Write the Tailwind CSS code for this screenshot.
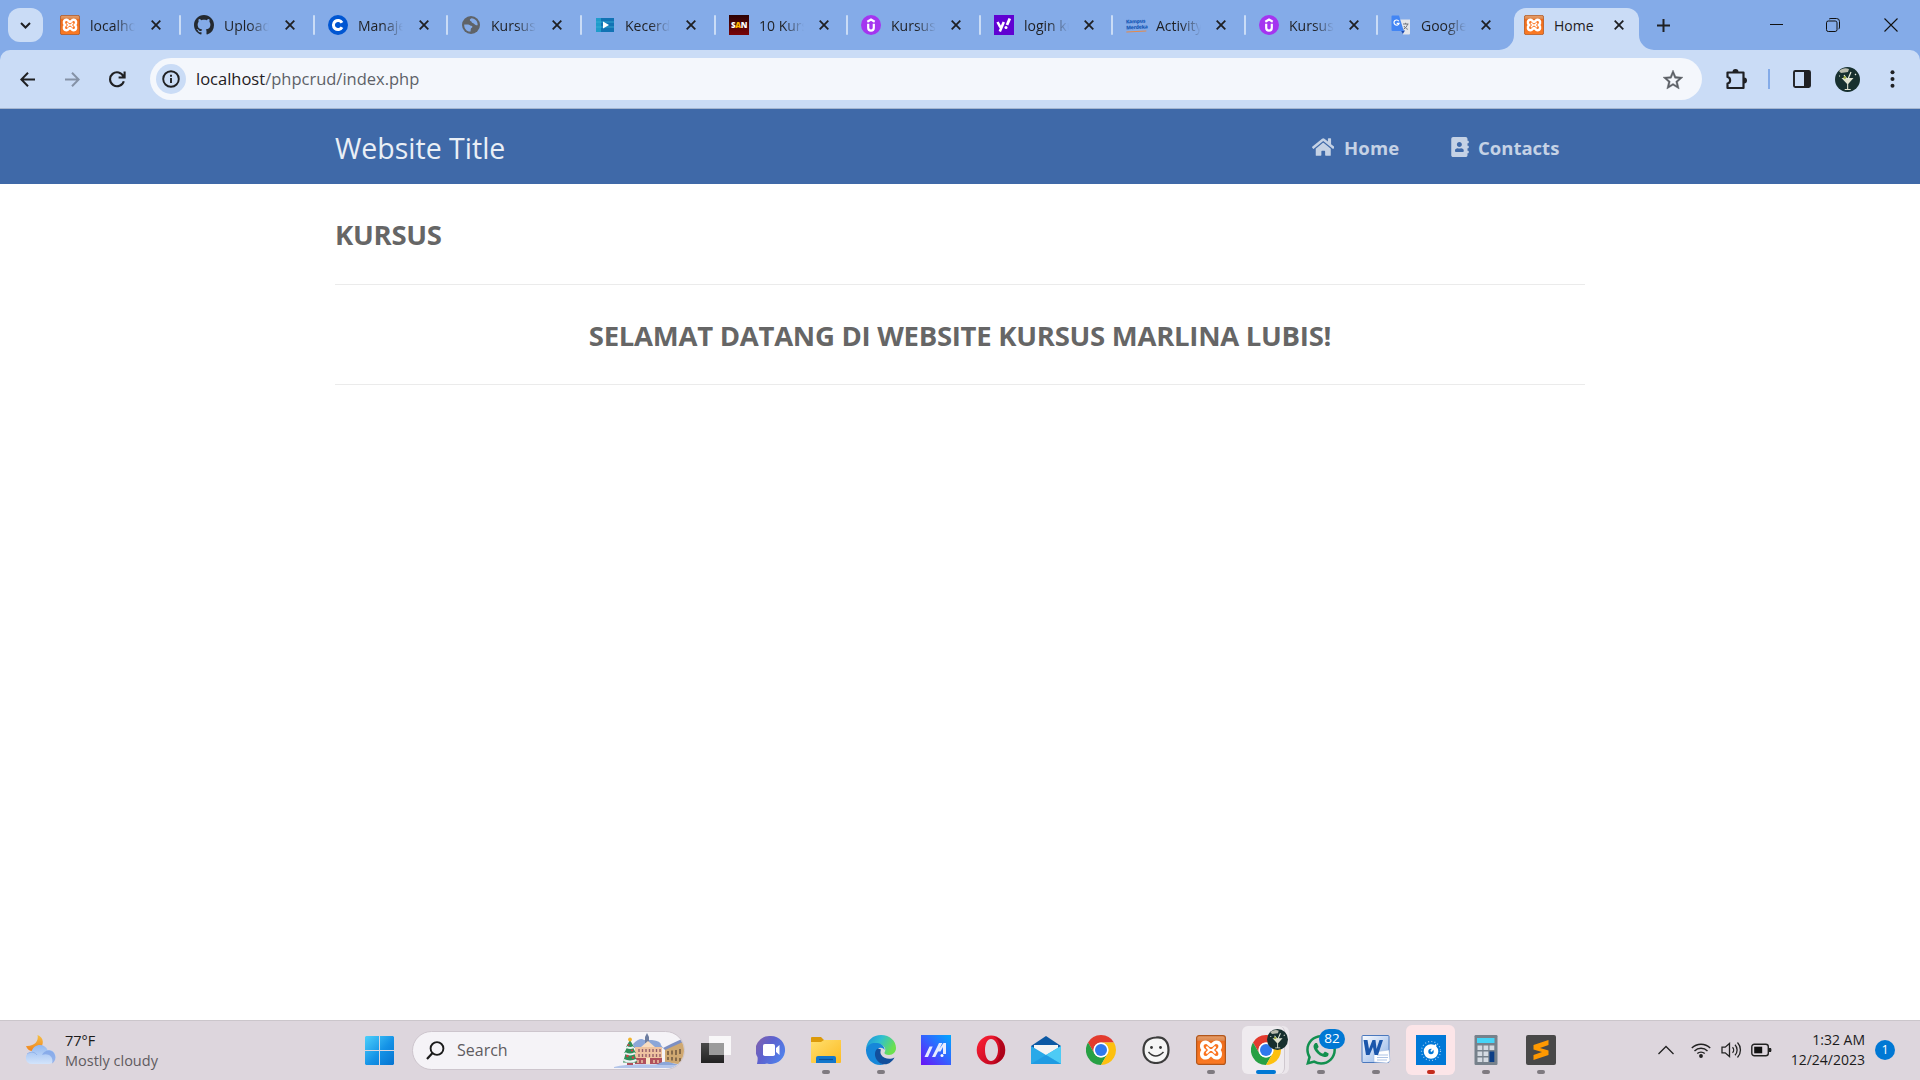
<!DOCTYPE html>
<html lang="en">
<head>
<meta charset="utf-8">
<title>Home</title>
<script src="https://cdn.jsdelivr.net/npm/@tailwindcss/browser@4"></script>
</head>
<body class="flex h-screen w-screen flex-col overflow-hidden bg-white font-['Open_Sans','Noto_Sans',sans-serif] text-[#1f2023]">

<!-- Shared icons -->
<svg class="absolute size-0">
  <defs>
    <linearGradient id="gOrange" x1="0" y1="0" x2="0" y2="1"><stop offset="0" stop-color="#e9a06c"/><stop offset=".16" stop-color="#dd8a50"/><stop offset=".2" stop-color="#ee6c1c"/><stop offset="1" stop-color="#fb7a24"/></linearGradient>
    <linearGradient id="gWin" gradientUnits="userSpaceOnUse" x1="0" y1="0" x2="29" y2="29"><stop offset="0" stop-color="#4cd0fb"/><stop offset=".55" stop-color="#1492e6"/><stop offset="1" stop-color="#0573d0"/></linearGradient>
    <linearGradient id="gFolder" x1="0" y1="0" x2="1" y2="1"><stop offset="0" stop-color="#ffdf6e"/><stop offset="1" stop-color="#fdbb22"/></linearGradient>
    <linearGradient id="gAsus" x1="0" y1="1" x2="1" y2="0"><stop offset="0" stop-color="#6a12f5"/><stop offset=".5" stop-color="#3560ff"/><stop offset="1" stop-color="#00a8ff"/></linearGradient>
    <linearGradient id="gEdge" x1="0" y1="0" x2="1" y2=".4"><stop offset="0" stop-color="#1b8fdc"/><stop offset=".5" stop-color="#2fbfd0"/><stop offset="1" stop-color="#6be04e"/></linearGradient>
    <linearGradient id="gOpera" x1="0" y1="0" x2="1" y2="1"><stop offset="0" stop-color="#ff2236"/><stop offset="1" stop-color="#b3001a"/></linearGradient>
    <linearGradient id="gChat" x1="0" y1="0" x2="1" y2=".6"><stop offset="0" stop-color="#8561a8"/><stop offset=".5" stop-color="#5d62cf"/><stop offset="1" stop-color="#5080ea"/></linearGradient>
    <linearGradient id="gCloud" x1="0" y1="0" x2="0" y2="1"><stop offset="0" stop-color="#92b8f0"/><stop offset="1" stop-color="#d3e4fb"/></linearGradient>
    <linearGradient id="gMoon" x1="0" y1="0" x2="0" y2="1"><stop offset="0" stop-color="#f6c044"/><stop offset="1" stop-color="#ef8320"/></linearGradient>
    <linearGradient id="gWord" x1="0" y1="0" x2="1" y2="1"><stop offset="0" stop-color="#fafcff"/><stop offset="1" stop-color="#8fb2e6"/></linearGradient>
    <linearGradient id="gDark" x1="0" y1="0" x2="0" y2="1"><stop offset="0" stop-color="#4a4a4a"/><stop offset="1" stop-color="#222"/></linearGradient>
  </defs>
  <symbol id="x" viewBox="0 0 10 10"><path d="M.7.7l8.6 8.6M9.3.7L.7 9.3" stroke="#1f2023" stroke-width="1.8"/></symbol>
  <symbol id="xampp" viewBox="0 0 30 30"><rect x=".6" y=".6" width="28.8" height="28.8" rx="2.5" fill="url(#gOrange)" stroke="#b2561a" stroke-width="1.2"/><path d="M10 7.200c2.600 0 3.400 3.300 5 3.300s2.400-3.300 5-3.300c5 0 5.200 5.400 2.400 7.800 2.800 2.400 2.600 7.800-2.400 7.800-2.600 0-3.400-3.300-5-3.300s-2.400 3.300-5 3.300c-5 0-5.200-5.400-2.400-7.800C4.800 12.600 5 7.200 10 7.200z" fill="#fb7420" stroke="#fff" stroke-width="3.600"/><path d="M11 12.300l2.500 2.700-2.500 2.700M19 12.300L16.500 15l2.500 2.700M13.500 15h3" fill="none" stroke="#fff" stroke-width="2.200" stroke-linecap="round"/></symbol>
  <symbol id="udemy" viewBox="0 0 20 20"><circle cx="10" cy="10" r="10" fill="#a435f0"/><path d="M7.200 8.800v4a2.800 2.800 0 0 0 5.600 0v-4M6.300 6.700L10 4.500l3.700 2.200" fill="none" stroke="#fff" stroke-width="2.200"/></symbol>
  <symbol id="chrome" viewBox="0 0 48 48"><path d="M24 12H44.780A24 24 0 0 0 3.210 12L13.610 30A12 12 0 0 1 24 12z" fill="#e33b2e"/><path d="M13.610 30L3.210 12A24 24 0 0 0 24 48L34.390 30A12 12 0 0 1 13.610 30z" fill="#27a044"/><path d="M34.390 30L24 48A24 24 0 0 0 44.780 12H24A12 12 0 0 1 34.390 30z" fill="#fdc00f"/><circle cx="24" cy="24" r="12" fill="#fff"/><circle cx="24" cy="24" r="9.600" fill="#3079ee"/></symbol>
  <symbol id="avatar" viewBox="0 0 25 25"><circle cx="12.500" cy="12.500" r="12.500" fill="#17302f"/><path d="M4 4c3-3 7-3.500 10-2l-1 3-7 1z" fill="#b9bcae"/><path d="M6.500 11h12l-5.300 6v5h2.500v1h-6v-1h2.400v-5z" fill="#dfe2cf"/><path d="M9 8l3 4M16 5l-3 7M20 7l1 1M4 9l1 0" stroke="#e8eee0" stroke-width="1.200"/><circle cx="9.800" cy="10.600" r="1.400" fill="#a3b13f"/></symbol>
</svg>

<!-- Tab strip -->
<div class="flex h-[50px] shrink-0 bg-[#84abe8] text-[14px]">
  <div class="flex w-[47px] shrink-0 items-center pl-2">
    <div class="flex h-[34px] w-[35px] items-center justify-center rounded-xl bg-[#cadcf6]">
      <svg class="h-[7px] w-[11px]" viewBox="0 0 11 7"><path d="M1 1l4.500 4.500L10 1" fill="none" stroke="#1f2023" stroke-width="2"/></svg>
    </div>
  </div>

  <div class="flex w-[134px] shrink-0 items-center pl-[13px]">
    <svg class="size-5 shrink-0"><use href="#xampp"/></svg>
    <span class="ml-[10px] w-[45px] shrink-0 overflow-hidden whitespace-nowrap [mask-image:linear-gradient(to_right,#000_55%,transparent)]">localhost</span>
    <svg class="ml-[16px] size-[10px] shrink-0"><use href="#x"/></svg><i class="ml-auto h-5 w-[2.500px] rounded-full bg-[#cadcf6]"></i>
  </div>
  <div class="flex w-[134px] shrink-0 items-center pl-[13px]">
    <svg class="size-5 shrink-0" viewBox="0 0 16 16"><path fill="#24292f" d="M8 0C3.580 0 0 3.580 0 8c0 3.540 2.290 6.530 5.470 7.590.4.070.550-.170.550-.380 0-.190-.010-.820-.010-1.490-2.010.370-2.530-.490-2.690-.940-.090-.230-.480-.940-.820-1.130-.280-.150-.680-.520-.010-.530.630-.010 1.080.580 1.230.820.720 1.210 1.870.870 2.330.660.070-.520.280-.870.510-1.070-1.780-.2-3.640-.890-3.640-3.950 0-.870.310-1.590.820-2.150-.080-.2-.360-1.020.080-2.120 0 0 .670-.210 2.200.820.640-.180 1.320-.270 2-.270s1.360.090 2 .270c1.530-1.040 2.200-.820 2.200-.820.440 1.100.160 1.920.080 2.120.510.560.820 1.270.820 2.150 0 3.070-1.870 3.750-3.650 3.950.290.250.540.730.540 1.480 0 1.070-.010 1.930-.010 2.200 0 .210.150.460.550.380A8.010 8.010 0 0 0 16 8c0-4.420-3.580-8-8-8z"/></svg>
    <span class="ml-[10px] w-[45px] shrink-0 overflow-hidden whitespace-nowrap [mask-image:linear-gradient(to_right,#000_55%,transparent)]">Upload</span>
    <svg class="ml-[16px] size-[10px] shrink-0"><use href="#x"/></svg><i class="ml-auto h-5 w-[2.500px] rounded-full bg-[#cadcf6]"></i>
  </div>
  <div class="flex w-[133px] shrink-0 items-center pl-[13px]">
    <svg class="size-5 shrink-0" viewBox="0 0 20 20"><circle cx="10" cy="10" r="10" fill="#0056d2"/><path d="M14 7.700A4.600 4.600 0 1 0 14 12.300" fill="none" stroke="#fff" stroke-width="3"/></svg>
    <span class="ml-[10px] w-[45px] shrink-0 overflow-hidden whitespace-nowrap [mask-image:linear-gradient(to_right,#000_55%,transparent)]">Manajemen</span>
    <svg class="ml-[16px] size-[10px] shrink-0"><use href="#x"/></svg><i class="ml-auto h-5 w-[2.500px] rounded-full bg-[#cadcf6]"></i>
  </div>
  <div class="flex w-[134px] shrink-0 items-center pl-[13px]">
    <svg class="size-5 shrink-0" viewBox="0 0 20 20"><circle cx="10" cy="10" r="9" fill="#5f6368"/><path d="M3.200 9.500h4c1.200 0 1.600 1 2.800 1.200 1.800.2 1.800 1.800.4 2.400-.8.400-.6 1.800-.8 3.400C6 16.800 3 14 3.200 9.500zM10.500 3.200c-2 .6-2.200 2.600-.6 3 1 .2.600 1.600 1.800 1.900 1.600.2 1.800 2.400 4.900 2.200C17 6.500 14.500 3.500 10.500 3.200z" fill="#84abe8"/></svg>
    <span class="ml-[10px] w-[45px] shrink-0 overflow-hidden whitespace-nowrap [mask-image:linear-gradient(to_right,#000_55%,transparent)]">Kursus</span>
    <svg class="ml-[16px] size-[10px] shrink-0"><use href="#x"/></svg><i class="ml-auto h-5 w-[2.500px] rounded-full bg-[#cadcf6]"></i>
  </div>
  <div class="flex w-[134px] shrink-0 items-center pl-[13px]">
    <svg class="size-5 shrink-0" viewBox="0 0 20 20"><path d="M1 3h18v14H1z" fill="#1f9ccb"/><path d="M6 3h13v14H6z" fill="#1173b4"/><path d="M1 7h18M1 12h18" stroke="#3fb5d8" stroke-width=".7"/><path d="M8 6.500l6 3.500-6 3.500z" fill="#fff"/></svg>
    <span class="ml-[10px] w-[45px] shrink-0 overflow-hidden whitespace-nowrap [mask-image:linear-gradient(to_right,#000_55%,transparent)]">Kecerdasan</span>
    <svg class="ml-[16px] size-[10px] shrink-0"><use href="#x"/></svg><i class="ml-auto h-5 w-[2.500px] rounded-full bg-[#cadcf6]"></i>
  </div>
  <div class="flex w-[132px] shrink-0 items-center pl-[13px]">
    <span class="flex size-5 shrink-0 items-center justify-center bg-gradient-to-b from-[#2c0204] to-[#7a0408] text-[8px] font-extrabold tracking-[-.3px] text-white">S<b class="text-amber-400">A</b>N</span>
    <span class="ml-[10px] w-[45px] shrink-0 overflow-hidden whitespace-nowrap [mask-image:linear-gradient(to_right,#000_55%,transparent)]">10 Kursus</span>
    <svg class="ml-[15px] size-[10px] shrink-0"><use href="#x"/></svg><i class="ml-auto h-5 w-[2.500px] rounded-full bg-[#cadcf6]"></i>
  </div>
  <div class="flex w-[133px] shrink-0 items-center pl-[13px]">
    <svg class="size-5 shrink-0"><use href="#udemy"/></svg>
    <span class="ml-[10px] w-[45px] shrink-0 overflow-hidden whitespace-nowrap [mask-image:linear-gradient(to_right,#000_55%,transparent)]">Kursus</span>
    <svg class="ml-[15px] size-[10px] shrink-0"><use href="#x"/></svg><i class="ml-auto h-5 w-[2.500px] rounded-full bg-[#cadcf6]"></i>
  </div>
  <div class="flex w-[132px] shrink-0 items-center pl-[13px]">
    <svg class="size-5 shrink-0" viewBox="0 0 20 20"><path d="M0 0h20v20H0z" fill="#6001d2"/><path d="M3.500 7l3 5.500M9.800 7l-4 9.500" stroke="#fff" stroke-width="2.600"/><path d="M15.800 3.500l-2.800 6.500" stroke="#fff" stroke-width="2.800"/><circle cx="12" cy="12.600" r="1.500" fill="#fff"/></svg>
    <span class="ml-[10px] w-[45px] shrink-0 overflow-hidden whitespace-nowrap [mask-image:linear-gradient(to_right,#000_55%,transparent)]">login kursus</span>
    <svg class="ml-[15px] size-[10px] shrink-0"><use href="#x"/></svg><i class="ml-auto h-5 w-[2.500px] rounded-full bg-[#cadcf6]"></i>
  </div>
  <div class="flex w-[133px] shrink-0 items-center pl-[13px]">
    <span class="flex h-[13px] w-5 shrink-0 -rotate-3 flex-col border-b-[1.500px] border-[#e58a4b] text-[5px] leading-[5.500px] font-extrabold tracking-[-.2px] text-[#1b5cb8]"><span>Kampus</span><span>Merdeka</span></span>
    <span class="ml-[10px] w-[45px] shrink-0 overflow-hidden whitespace-nowrap [mask-image:linear-gradient(to_right,#000_55%,transparent)]">Activity</span>
    <svg class="ml-[15px] size-[10px] shrink-0"><use href="#x"/></svg><i class="ml-auto h-5 w-[2.500px] rounded-full bg-[#cadcf6]"></i>
  </div>
  <div class="flex w-[132px] shrink-0 items-center pl-[13px]">
    <svg class="size-5 shrink-0"><use href="#udemy"/></svg>
    <span class="ml-[10px] w-[45px] shrink-0 overflow-hidden whitespace-nowrap [mask-image:linear-gradient(to_right,#000_55%,transparent)]">Kursus</span>
    <svg class="ml-[15px] size-[10px] shrink-0"><use href="#x"/></svg><i class="ml-auto h-5 w-[2.500px] rounded-full bg-[#cadcf6]"></i>
  </div>
  <div class="flex w-[121px] shrink-0 items-center pl-[13px]">
    <svg class="size-5 shrink-0" viewBox="0 0 20 20"><path d="M8.500 4.500H19v14a1 1 0 0 1-1 1h-6z" fill="#e4e6ea"/><path d="M10 15.500h4L11.800 19z" fill="#1b49b0"/><path d="M1.500.5H8l4.800 15.500H1.500a1 1 0 0 1-1-1v-13.500a1 1 0 0 1 1-1z" fill="#4285f4"/><path d="M7.800 6.200a2.600 2.600 0 1 0 .3 2.100H5.700" fill="none" stroke="#fff" stroke-width="1.200"/><path d="M12 9h5.500M14.600 7.800V9M16.500 9c-.4 2.200-1.800 4-4 5.200M13 11c.8 1.500 2 2.600 3.800 3.300" fill="none" stroke="#70757c" stroke-width="1"/></svg>
    <span class="ml-[10px] w-[45px] shrink-0 overflow-hidden whitespace-nowrap [mask-image:linear-gradient(to_right,#000_55%,transparent)]">Google</span>
    <svg class="ml-[15px] size-[10px] shrink-0"><use href="#x"/></svg>
  </div>

  <!-- Active tab -->
  <div class="flex w-[155px] shrink-0 items-end">
    <svg class="size-[15px] shrink-0" viewBox="0 0 15 15"><path d="M0 15A15 15 0 0 0 15 0V15z" fill="#cadcf6"/></svg>
    <div class="flex h-[42.500px] w-[125px] shrink-0 items-center rounded-t-xl bg-[#cadcf6] pb-[7.500px] pl-[10px]">
      <svg class="size-5 shrink-0"><use href="#xampp"/></svg>
      <span class="ml-[10px] w-[60px]">Home</span>
      <svg class="size-[10px] shrink-0"><use href="#x"/></svg>
    </div>
    <svg class="size-[15px] shrink-0" viewBox="0 0 15 15"><path d="M15 15A15 15 0 0 1 0 0V15z" fill="#cadcf6"/></svg>
  </div>
  <div class="flex flex-1 items-center pr-[22px]">
    <svg class="ml-[3px] size-[13px]" viewBox="0 0 13 13"><path d="M6.500 0v13M0 6.500h13" stroke="#1f2023" stroke-width="2"/></svg>
    <svg class="ml-auto h-[14px] w-[13px]" viewBox="0 0 13 14"><path d="M0 6.500h13" stroke="#111"/></svg>
    <svg class="ml-[43px] size-[14px]" viewBox="0 0 14 14" fill="none" stroke="#111"><rect x=".5" y="3" width="10.500" height="10.500" rx="1.800"/><path d="M3 1.200Q3.500.5 5 .5h5.500a3 3 0 0 1 3 3V9q0 1.600-1 2.200"/></svg>
    <svg class="ml-[44px] size-[14px]" viewBox="0 0 14 14"><path d="M.5.5l13 13M13.500.5l-13 13" stroke="#111" stroke-width="1.100"/></svg>
  </div>
</div>

<!-- Toolbar -->
<div class="h-[59px] shrink-0 bg-[#84abe8]">
<div class="flex h-full items-center rounded-t-[10px] border-b border-[#a5b6d0] bg-[#cadcf6]">
  <svg class="ml-[20px] size-[15px]" viewBox="0 0 15 15"><path d="M15 7.500H1.500M8 .8L1.300 7.500 8 14.200" fill="none" stroke="#1f2023" stroke-width="2"/></svg>
  <svg class="ml-[30px] size-[15px]" viewBox="0 0 15 15"><path d="M0 7.500h13.500M7 .8l6.700 6.700L7 14.200" fill="none" stroke="#8592a6" stroke-width="2"/></svg>
  <svg class="ml-[29px] size-[17px]" viewBox="0 0 17 17"><path d="M14.800 10.200A7 7 0 1 1 14.500 5.500M15.600.5v6h-6" fill="none" stroke="#1f2023" stroke-width="2.100"/></svg>
  <div class="ml-[24px] flex h-[42px] w-[1552px] items-center rounded-full bg-[#f4f7fc] pr-[17px] pl-[6px]">
    <span class="flex size-[30px] items-center justify-center rounded-full bg-[#cadcf6]">
      <svg class="size-[18px]" viewBox="0 0 18 18"><circle cx="9" cy="9" r="7.800" fill="none" stroke="#1f2023" stroke-width="1.900"/><path d="M9 8v5M9 4.800v1.900" stroke="#1f2023" stroke-width="1.900"/></svg>
    </span>
    <span class="ml-[10px] pt-px text-[16.500px] text-[#5d6168]"><span class="text-[#1f2023]">localhost</span>/phpcrud/index.php</span>
    <svg class="mt-[2px] ml-auto size-[24px]" viewBox="0 0 24 24"><path fill="#5b5f66" stroke="#5b5f66" stroke-width=".4" d="M22 9.240l-7.190-.620L12 2 9.190 8.630 2 9.240l5.460 4.730L5.820 21 12 17.270 18.180 21l-1.630-7.030L22 9.240zM12 15.400l-3.760 2.270 1-4.280-3.320-2.880 4.380-.380L12 6.100l1.710 4.040 4.380.380-3.320 2.880 1 4.280L12 15.400z"/></svg>
  </div>
  <svg class="ml-[24px] size-[21px]" viewBox="0 0 21 21"><path d="M1.500 3.500h16v15.500h-16v-4.500c3.500-.5 3.500-6 0-6.500z" fill="none" stroke="#1f2023" stroke-width="2.200" stroke-linejoin="round"/><path d="M6.500 3a3 3 0 0 1 6 0zM18 8.500a3 3 0 0 1 0 6z" fill="#1f2023"/></svg>
  <i class="ml-[21px] h-5 w-[2px] bg-[#84abe8]"></i>
  <svg class="ml-[23px] size-[18px]" viewBox="0 0 18 18"><rect x="1" y="1" width="16" height="16" rx="1.200" fill="none" stroke="#1f2023" stroke-width="1.900"/><path d="M11 1h6v16h-6z" fill="#1f2023"/></svg>
  <svg class="ml-[24px] size-[25px]"><use href="#avatar"/></svg>
  <svg class="ml-[30px] h-[18px] w-[5px]" viewBox="0 0 5 18"><g fill="#1f2023"><circle cx="2.500" cy="2.200" r="2"/><circle cx="2.500" cy="9" r="2"/><circle cx="2.500" cy="15.800" r="2"/></g></svg>
</div>
</div>

<!-- Site navigation -->
<nav class="flex h-[75px] shrink-0 items-center bg-[#3f69a8] px-[335px]">
  <h1 class="flex-1 pt-[4px] text-[28.500px] leading-none text-[#eaeff6]">Website Title</h1>
  <div class="flex items-center pt-px pr-[25px] text-[18.500px] font-bold text-[#c5d2e5]">
    <svg class="mr-[10px] h-5 w-[22.500px]" viewBox="0 0 576 512" fill="currentColor"><path d="M280.370 148.260L96 300.110V464a16 16 0 0 0 16 16l112.060-.290a16 16 0 0 0 15.920-16V368a16 16 0 0 1 16-16h64a16 16 0 0 1 16 16v95.640a16 16 0 0 0 16 16.050L464 480a16 16 0 0 0 16-16V300L295.670 148.260a12.190 12.190 0 0 0-15.300 0zM571.600 251.470L488 182.560V44.050a12 12 0 0 0-12-12h-56a12 12 0 0 0-12 12v72.610L318.470 43a48 48 0 0 0-61 0L4.340 251.470a12 12 0 0 0-1.600 16.900l25.500 31A12 12 0 0 0 45.150 301l235.220-193.740a12.190 12.190 0 0 1 15.300 0L530.900 301a12 12 0 0 0 16.900-1.600l25.500-31a12 12 0 0 0-1.700-16.930z"/></svg>
    <a class="w-[107px] pt-px tracking-[.2px]">Home</a>
    <svg class="mr-[9px] h-[20px] w-[18px]" viewBox="0 0 448 512" fill="currentColor"><path d="M436 160c6.600 0 12-5.400 12-12v-40c0-6.600-5.400-12-12-12h-20V48c0-26.500-21.500-48-48-48H48C21.500 0 0 21.500 0 48v416c0 26.500 21.500 48 48 48h320c26.500 0 48-21.500 48-48v-48h20c6.600 0 12-5.400 12-12v-40c0-6.600-5.400-12-12-12h-20v-64h20c6.600 0 12-5.400 12-12v-40c0-6.600-5.400-12-12-12h-20v-64h20zm-228-32c35.300 0 64 28.700 64 64s-28.700 64-64 64-64-28.700-64-64 28.700-64 64-64zm112 236.800c0 10.600-10 19.200-22.400 19.200H118.400C106 384 96 375.400 96 364.800v-19.200c0-31.800 30.100-57.600 67.200-57.600h5c12.300 5.100 25.700 8 39.800 8s27.600-2.900 39.800-8h5c37.100 0 67.200 25.800 67.200 57.600v19.200z"/></svg>
    <a class="w-[82px] pt-px whitespace-nowrap">Contacts</a>
  </div>
</nav>

<main class="flex-1 px-[335px] text-[27.500px] font-bold tracking-[-.27px] text-[#666]">
  <h2 class="flex h-[101px] items-center border-b border-[#ebebeb] pt-[2px]">KURSUS</h2>
  <h2 class="flex h-[100px] items-center justify-center border-b border-[#ebebeb] pt-[2px] whitespace-nowrap">SELAMAT DATANG DI WEBSITE KURSUS MARLINA LUBIS!</h2>
</main>

<!-- Taskbar -->
<footer class="flex h-[60px] shrink-0 items-center border-t border-[#cbc6cb] bg-[#ddd6dd]">
  <svg class="mb-px ml-[26px] size-[30px] shrink-0" viewBox="0 0 30 30"><path d="M11.500 0c1.500 6-3 11.500-11.500 11 1 3.500 4 5.500 8 5 6-.8 9-5 8.800-9.500C16.600 3.500 14.500 1 11.500 0z" fill="url(#gMoon)"/><path d="M6 29a6 6 0 0 1-.5-12C6.500 12.500 10 10 14 10c3.500 0 6.500 2 7.500 5a7 7 0 0 1 2 14z" fill="url(#gCloud)"/><path d="M16 20c2-4.500 7-6 11-3 4 4 2.500 10-1 11.500 2-6-3-11-10-8.500z" fill="#7198e2" opacity=".6"/><path d="M1 19c4-3 8-2 10 1" fill="none" stroke="#7fa3e4" stroke-width="1" opacity=".6"/></svg>
  <div class="ml-[9px] w-[300px] text-[14.500px] leading-5">
    <p class="text-[#1b1b1b]">77°F</p>
    <p class="text-[#5f5b60]">Mostly cloudy</p>
  </div>
  <svg class="size-[29px] shrink-0" viewBox="0 0 29 29"><path fill="url(#gWin)" d="M1 0h13v14H0V1zM15 0h13l1 1v13H15zM0 15h14v14H1l-1-1zM15 15h14v13l-1 1H15z"/></svg>
  <div class="mb-px ml-[18px] flex h-[39px] w-[273px] shrink-0 items-center overflow-hidden rounded-full border border-[#cdc5cd] bg-[#f5f3f7] pl-[13px]">
    <svg class="size-[19px] shrink-0" viewBox="0 0 19 19"><circle cx="11" cy="7.500" r="6.400" fill="none" stroke="#1b1b1b" stroke-width="1.900"/><path d="M6.500 12L1 18" stroke="#1b1b1b" stroke-width="2.200"/></svg>
    <span class="ml-[12px] text-[16px] text-[#5f5b60]">Search</span>
    <svg class="ml-auto h-[36px] w-[70px] shrink-0" viewBox="0 0 70 36">
      <path d="M0 35q14-3.500 38-2.500 18-.5 32-1.500v5H0z" fill="#b3c5ea"/>
      <path d="M19 12q7-7 11-4h8q9 1 9 5l2 3H20z" fill="#8ba6d8"/>
      <path d="M31 5l2-4 2 4v6h-4z" fill="#6d7da0"/>
      <path d="M21 15h27v12H21z" fill="#efc3a0"/><path d="M27 15l7-6 7 6z" fill="#f7dcc0"/><path d="M21 26h27v6H21z" fill="#b0505c"/>
      <path d="M25 17v3M28.500 17v3M32 17v3M35.500 17v3M39 17v3M42.500 17v3M46 17v3M25 22v3M28.500 22v3M32 22v3M35.500 22v3M39 22v3M42.500 22v3M46 22v3" stroke="#96606a" stroke-width="1.400"/><path d="M24 28v3M28 28v3M40 28v3M44 28v3" stroke="#f0cfa8" stroke-width="1.400"/><path d="M32 26h4v6h-4z" fill="#f8e7c6"/>
      <path d="M51 16l19-7v24l-19-3z" fill="#cfa871"/><path d="M49 16l8-4 13-6v3.500L51 18z" fill="#7d8fc2"/><path d="M54 19v4M58 18.500v4M62 18v5M66 17v5M54 25v3M58 25v3.500M62 25.500v3.500M66 26v3.500" stroke="#6c563f" stroke-width="1.500"/><path d="M44 32q6-4 14-1l6 2H42z" fill="#8ba6d8"/>
      <path d="M16 8l4 7h-1.200l3 6h-1.500l2.700 9.500H9l2.700-9.500h-1.500l3-6H12z" fill="#2f8f58"/><path d="M12.500 15q4 2 7 0M11 21q5 3 10 0M9.500 28q6.500 3 13 0" stroke="#eaf2f2" stroke-width="2" fill="none"/><path d="M13 31h6v2h-6z" fill="#b0505c"/><circle cx="16" cy="7.500" r="1.900" fill="#f1b32b"/><g fill="#da3b43"><circle cx="14.500" cy="13" r="1"/><circle cx="18" cy="18.500" r="1.100"/><circle cx="13.500" cy="24" r="1.200"/><circle cx="19" cy="25.500" r="1.200"/></g>
    </svg>
  </div>

  <!-- Pinned and running apps -->
  <div class="ml-[3px] flex h-full shrink-0 [&>div]:relative [&>div]:flex [&>div]:w-[55px] [&>div]:items-center [&>div]:justify-center [&>div]:pb-px">
    <div><svg class="size-[30px]" viewBox="0 0 30 30"><path d="M0 8h23v20H0z" fill="url(#gDark)"/><path d="M8 1h22v19H8z" fill="#fff" opacity=".8"/><path d="M8 8h15v12H8z" fill="#9b9b9b"/></svg></div>
    <div><svg class="size-[30px]" viewBox="0 0 30 30"><path d="M15 1a14 14 0 1 1-4 27.400q-3 .9-6 .6L1 29q1-4 .5-7A14 14 0 0 1 15 1z" fill="url(#gChat)"/><rect x="7" y="9" width="12" height="12" rx="1.800" fill="#fff"/><path d="M20 13l3.500-3v10L20 17z" fill="#fff"/></svg></div>
    <div><svg class="size-[30px]" viewBox="0 0 30 30"><path d="M0 3q0-1 1-1h9l3 3h16q1 0 1 1v6H0z" fill="#dc9a0a"/><path d="M0 7h10l3-2h17v22q0 1-1 1H1q-1 0-1-1z" fill="url(#gFolder)"/><path d="M5 28v-5q0-2 2-2h16q2 0 2 2v5z" fill="#1377cc"/><path d="M8 24.500h14" stroke="#0b519a" stroke-width="1.200"/></svg><i class="absolute bottom-[6px] h-1 w-2 rounded-full bg-[#7f7a80]"></i></div>
    <div><svg class="size-[30px]" viewBox="0 0 30 30"><path d="M0 14C1 5 7 0 15 0c9 0 15 6 15 13 0 4-3 7-7 7-3 0-5-1-4.500-2.500C21 14 18 9 11.500 9 5 9 1 12 0 14z" fill="url(#gEdge)"/><path d="M0 14c2-5 6-6.500 11-6 5 .5 8 4 7.500 7-.5-2-5-4-7.500 0-3 5 0 12 7 14.500C8 32-.5 24 0 14z" fill="#1687d9"/><path d="M11 14c-4 4-2 12 5 15 6 1.500 10-2 12.500-6.500-4 2.500-11 1.500-13.500-3-1-2-.5-3.500 0-5-1.500-.8-3-.8-4-.5z" fill="#124f9c"/></svg><i class="absolute bottom-[6px] h-1 w-2 rounded-full bg-[#7f7a80]"></i></div>
    <div><svg class="size-[30px]" viewBox="0 0 30 30"><path d="M0 0h30v30H0z" fill="url(#gAsus)"/><path d="M3.500 22l5-10.500h3.200L7 22zM11 22l7-14h3.300l-7 14zM22.500 8H25v11h-3v-7l-2.500 4.500h-3z" fill="#e6ebff"/><circle cx="21" cy="20.500" r="1.500" fill="#fff"/></svg></div>
    <div><svg class="size-[30px]" viewBox="0 0 30 30"><path fill-rule="evenodd" d="M15 .5a14.300 14.500 0 1 1 0 29 14.300 14.500 0 1 1 0-29zM15 4c-3.500 0-6 4.500-6 11s2.500 11 6 11 7-4.500 7-11-3.500-11-7-11z" fill="url(#gOpera)"/><path d="M18 1.500Q29 4 29 15t-11 13.500Q24 25 24 15T18 1.500z" fill="#9c0015" opacity=".6"/></svg></div>
    <div><svg class="size-[30px]" viewBox="0 0 30 30"><path d="M0 11L15 1l15 10v7H0z" fill="#0c59a4"/><path d="M3 10h24v12H3z" fill="#f4f4f4"/><path d="M0 11l15 9 15-9v18H0z" fill="#29a9e8"/><path d="M15 20l15-9v18z" fill="#4dcbf5"/><path d="M0 29l15-9 15 9z" fill="#1c97e0" opacity=".75"/></svg></div>
    <div><svg class="size-[30px]"><use href="#chrome"/></svg></div>
    <div><svg class="size-[28px]" viewBox="0 0 28 28"><path d="M14 1.500c8-1 12.500 4 12.500 12.500S21 27 14 27 1.500 22 1.500 14 6 2 14 1.500z" fill="#f5f5f5" stroke="#3c3c3c" stroke-width="2.200"/><circle cx="9.500" cy="11.500" r="1.400" fill="#333"/><circle cx="18.500" cy="11.500" r="1.400" fill="#333"/><path d="M6.500 16q7 8 15 0" fill="none" stroke="#333" stroke-width="1.500"/></svg></div>
    <div><svg class="size-[30px]"><use href="#xampp"/></svg><i class="absolute bottom-[6px] h-1 w-2 rounded-full bg-[#7f7a80]"></i></div>
    <div>
      <span class="absolute top-[5px] left-[4px] h-[48px] w-[43px] rounded-md border-r border-[#cfc8cf] bg-[#efebef] shadow-[4px_0_0_#ebe6eb]"></span>
      <svg class="relative size-[30px]"><use href="#chrome"/></svg>
      <svg class="absolute top-[8px] left-[29px] size-[21px]"><use href="#avatar"/></svg>
      <i class="absolute bottom-[6px] h-1 w-5 rounded-full bg-[#0078d4]"></i>
    </div>
    <div><svg class="size-[30px]" viewBox="0 0 24 24"><path fill="#12904f" d="M17.472 14.382c-.297-.149-1.758-.867-2.030-.967-.273-.099-.471-.148-.670.150-.197.297-.767.966-.940 1.164-.173.199-.347.223-.644.075-.297-.150-1.255-.463-2.390-1.475-.883-.788-1.480-1.761-1.653-2.059-.173-.297-.018-.458.130-.606.134-.133.298-.347.446-.520.149-.174.198-.298.298-.497.099-.198.050-.371-.025-.520-.075-.149-.669-1.612-.916-2.207-.242-.579-.487-.5-.669-.510-.173-.008-.371-.010-.570-.010-.198 0-.520.074-.792.372-.272.297-1.040 1.016-1.040 2.479 0 1.462 1.065 2.875 1.213 3.074.149.198 2.096 3.200 5.077 4.487.709.306 1.262.489 1.694.625.712.227 1.360.195 1.871.118.571-.085 1.758-.719 2.006-1.413.248-.694.248-1.289.173-1.413-.074-.124-.272-.198-.570-.347m-5.421 7.403h-.004a9.870 9.870 0 0 1-5.031-1.378l-.361-.214-3.741.982.998-3.648-.235-.374a9.860 9.860 0 0 1-1.510-5.260c.001-5.450 4.436-9.884 9.888-9.884 2.640 0 5.122 1.030 6.988 2.898a9.825 9.825 0 0 1 2.893 6.994c-.003 5.450-4.437 9.884-9.885 9.884m8.413-18.297A11.815 11.815 0 0 0 12.050 0C5.495 0 .160 5.335.157 11.892c0 2.096.547 4.142 1.588 5.945L.057 24l6.305-1.654a11.882 11.882 0 0 0 5.683 1.448h.005c6.554 0 11.890-5.335 11.893-11.893a11.821 11.821 0 0 0-3.480-8.413Z"/></svg>
      <span class="absolute top-[8px] left-[26px] flex h-5 w-[26px] items-center justify-center rounded-full bg-[#0078d4] text-[13.500px] leading-none text-white">82</span><i class="absolute bottom-[6px] h-1 w-2 rounded-full bg-[#7f7a80]"></i></div>
    <div><svg class="size-[30px]" viewBox="0 0 30 30"><rect x="1" y=".5" width="27" height="27" rx="1" fill="url(#gWord)" stroke="#4a78bd"/><path d="M13 17l15-2 1 11-3 2-13-1z" fill="#fff" stroke="#9ab4dc" stroke-width=".5"/><path d="M16 20h11M16 22.500h11M16 25h10" stroke="#8aa9da" stroke-width=".7"/><path d="M2.500 5h4l1.500 9L11.500 5h3l1 9L18.500 5H22l-5 15h-3.500l-1.500-8-3.500 8H5z" fill="#1b56ab"/></svg><i class="absolute bottom-[6px] h-1 w-2 rounded-full bg-[#7f7a80]"></i></div>
    <div><span class="absolute inset-x-[3px] top-[4px] h-[50px] rounded-md bg-[#fce5e8]"></span><svg class="relative size-[30px]" viewBox="0 0 30 30"><path d="M0 0h30v30H0z" fill="#0078d7"/><circle cx="15" cy="16" r="9.500" fill="none" stroke="#9fcdf5" stroke-width="1.200" stroke-dasharray="1 2.200"/><circle cx="15" cy="16.500" r="5" fill="none" stroke="#fff" stroke-width="4.600"/><path d="M15 16.500l5-7" stroke="#fff" stroke-width="1.800"/></svg><i class="absolute bottom-[6px] h-1 w-2 rounded-full bg-[#c42b1c]"></i></div>
    <div><svg class="size-[30px]" viewBox="0 0 30 30"><rect x="3.500" width="23" height="30" rx="1.200" fill="#76818b"/><path d="M6 3h17.500v5H6z" fill="#45d5f7"/><g fill="#d5dbe2"><path d="M6.500 10.500h4.800v4.500H6.500zM12.500 10.500h4.800v4.500h-4.800zM18.500 10.500h4.800v4.500h-4.800zM6.500 16.500h4.800v4.500H6.500zM12.500 16.500h4.800v4.500h-4.800zM6.500 22.500h4.800v4.500H6.500zM12.500 22.500h4.800v4.500h-4.800z"/></g><path d="M18.500 16.500h4.800V27h-4.800z" fill="#0d3f86"/></svg><i class="absolute bottom-[6px] h-1 w-2 rounded-full bg-[#7f7a80]"></i></div>
    <div><svg class="size-[30px]" viewBox="0 0 30 30"><rect width="30" height="30" rx="2" fill="#484848"/><path d="M7.500 10l15-5v5l-8.500 3 8.500 2.500v4.500l-15 5v-5l8.500-3-8.500-2.500z" fill="#ff9800"/></svg><i class="absolute bottom-[6px] h-1 w-2 rounded-full bg-[#7f7a80]"></i></div>
  </div>

  <!-- System tray -->
  <div class="ml-auto flex items-center pr-[25px] pb-px">
    <svg class="h-[10px] w-[16px]" viewBox="0 0 16 10"><path d="M.5 9L8 1.500 15.500 9" fill="none" stroke="#222" stroke-width="1.300"/></svg>
    <svg class="ml-[17px] h-[16px] w-[20px]" viewBox="0 0 20 16" fill="none" stroke="#222" stroke-width="1.400"><path d="M.8 6a13 13 0 0 1 18.400 0M3.500 8.900a9.200 9.200 0 0 1 13 0M6.300 11.600a5.300 5.300 0 0 1 7.400 0"/><circle cx="10" cy="14" r="1.200" fill="#222"/></svg>
    <svg class="ml-[10px] h-[18px] w-[21px]" viewBox="0 0 21 18" fill="none" stroke="#222" stroke-width="1.300"><path d="M1 6.200h3.200L8.500 2.500v13L4.200 11.800H1zM11.500 6.200a4 4 0 0 1 0 5.600M14 3.800a7.500 7.500 0 0 1 0 10.400M16.500 1.500a11 11 0 0 1 0 15"/></svg>
    <svg class="ml-[9px] h-[14px] w-[21px]" viewBox="0 0 21 14"><rect x=".8" y="1.300" width="16.500" height="11.400" rx="2.500" fill="none" stroke="#222" stroke-width="1.400"/><path d="M3.200 3.700h8v6.600h-8z" fill="#111"/><path d="M18 5h2q1 2 0 4h-2z" fill="#222"/></svg>
    <div class="ml-[13px] w-[80px] text-right text-[14px] leading-5 text-[#1b1b1b]"><p>1:32 AM</p><p>12/24/2023</p></div>
    <span class="ml-[10px] flex size-5 items-center justify-center rounded-full bg-[#0078d4] text-[12.500px] leading-none text-white">1</span>
  </div>
</footer>
</body>
</html>
